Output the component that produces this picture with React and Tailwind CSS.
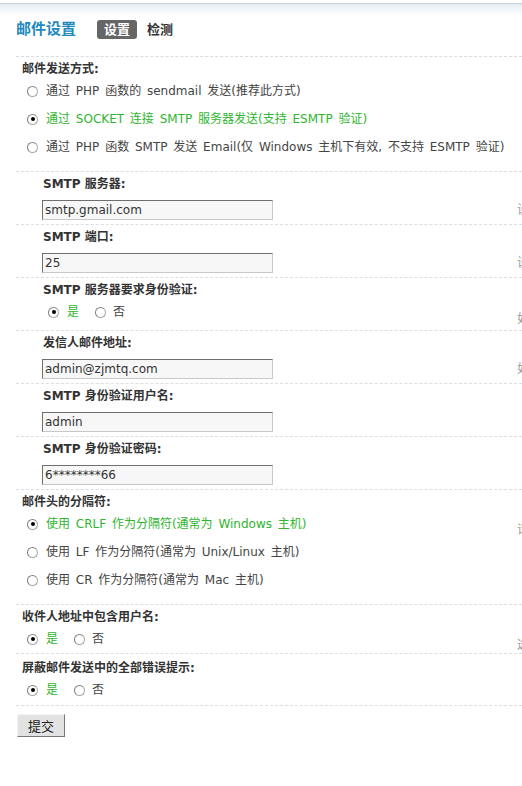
import React from "react";

const GREEN = "text-[#2fb52f]";

function Radio({ checked }) {
  return (
    <span className="w-[11px] h-[11px] shrink-0 rounded-full border border-[#a8a8a8] border-l-[#808080] border-t-[#808080] bg-white flex items-center justify-center">
      {checked && <span className="w-[4px] h-[4px] rounded-full bg-black" />}
    </span>
  );
}

function Option({ checked, children }) {
  return (
    <div className={"h-[28px] flex items-center gap-[8px] " + (checked ? GREEN : "")}>
      <Radio checked={checked} />
      <span className="whitespace-nowrap [word-spacing:2px]">{children}</span>
    </div>
  );
}

function YesNo({ indent }) {
  return (
    <div className={"h-[28px] flex items-center " + indent}>
      <Radio checked />
      <span className={"ml-[8px] " + GREEN}>是</span>
      <span className="ml-[16px]">
        <Radio />
      </span>
      <span className="ml-[7px]">否</span>
    </div>
  );
}

function Label({ children, indent }) {
  return <div className={"h-[16px] leading-[16px] font-bold text-[#333] whitespace-nowrap " + indent}>{children}</div>;
}

function Hint({ children, top = "pt-[30px]" }) {
  return <div className={"text-[#999] whitespace-nowrap leading-[16px] " + top}>{children}</div>;
}

function Row({ children, hint, hintTop, className = "" }) {
  return (
    <div className={"flex border-t border-dashed border-[#d6e0e6] " + className}>
      <div className="w-[501px] shrink-0">{children}</div>
      {hint && <Hint top={hintTop}>{hint}</Hint>}
    </div>
  );
}

function InputRow({ label, value, hint }) {
  return (
    <Row hint={hint} className="pt-[4px] pb-[4px]" hintTop="pt-[26px]">
      <Label indent="pl-[27px]">{label}</Label>
      <div className="mt-[8px] ml-[26px] w-[231px] h-[20px] bg-[#f7f7f7] border border-[#c8c8c8] border-t-[#6f6f6f] border-l-[#6f6f6f] pl-[2px] leading-[18px] text-[#333]">
        {value}
      </div>
    </Row>
  );
}

export default function App() {
  return (
    <div className="w-[522px] min-h-[786px] bg-white overflow-hidden text-[12px] text-[#444] font-[DejaVu_Sans,Noto_Sans_CJK_SC,sans-serif]">
      <div className="mt-[3px] h-[13px] border-t border-[#c5d3dc] bg-linear-to-b from-[#e4edf2] to-white" />

      <div className="pl-[16px]">
        <div className="mt-[4px] h-[19px] flex items-center">
          <span className="text-[15px] font-bold text-[#2389bd] leading-[19px]">邮件设置</span>
          <span className="ml-[21px] h-[19px] w-[40px] rounded-[3px] bg-[#666] text-white font-bold text-[13px] leading-[19px] text-center">
            设置
          </span>
          <span className="ml-[10px] font-bold text-[13px] text-[#333]">检测</span>
        </div>

        <div className="mt-[17px]">
          <Row className="pt-[4px] pb-[10px] border-[#d8dde0]">
            <Label indent="pl-[6px]">邮件发送方式:</Label>
            <div className="pl-[11px]">
              <Option>通过 PHP 函数的 sendmail 发送(推荐此方式)</Option>
              <Option checked>通过 SOCKET 连接 SMTP 服务器发送(支持 ESMTP 验证)</Option>
              <Option>通过 PHP 函数 SMTP 发送 Email(仅 Windows 主机下有效, 不支持 ESMTP 验证)</Option>
            </div>
          </Row>

          <InputRow label="SMTP 服务器:" value="smtp.gmail.com" hint="设置 SMTP 服务器的地址" />
          <InputRow label="SMTP 端口:" value="25" hint="设置 SMTP 服务器的端口, 默认为 25" />

          <Row className="pt-[4px] pb-[3px]" hint="如果 SMTP 服务器要求身份验证才可以发信, 请选择“是”" hintTop="pt-[29px]">
            <Label indent="pl-[27px]">SMTP 服务器要求身份验证:</Label>
            <YesNo indent="pl-[32px]" />
          </Row>

          <InputRow label="发信人邮件地址:" value="admin@zjmtq.com" hint="如果需要验证, 必须为本服务器的邮件地址" />
          <InputRow label="SMTP 身份验证用户名:" value="admin" />
          <InputRow label="SMTP 身份验证密码:" value="6********66" />

          <Row className="pt-[4px] pb-[10px]" hint="请根据您邮件服务器的设置调整此参数" hintTop="pt-[28px]">
            <Label indent="pl-[6px]">邮件头的分隔符:</Label>
            <div className="pl-[11px]">
              <Option checked>使用 CRLF 作为分隔符(通常为 Windows 主机)</Option>
              <Option>使用 LF 作为分隔符(通常为 Unix/Linux 主机)</Option>
              <Option>使用 CR 作为分隔符(通常为 Mac 主机)</Option>
            </div>
          </Row>

          <Row className="pt-[4px]" hint="选择“是”将在收件人地址中包含用户名" hintTop="pt-[28px]">
            <Label indent="pl-[6px]">收件人地址中包含用户名:</Label>
            <YesNo indent="pl-[11px]" />
          </Row>

          <Row className="pt-[6px] pb-[1px] border-b">
            <Label indent="pl-[6px]">屏蔽邮件发送中的全部错误提示:</Label>
            <YesNo indent="pl-[11px]" />
          </Row>
        </div>

        <button className="mt-[8px] ml-[1px] w-[48px] h-[23px] bg-[#e2e2e2] border border-[#f4f4f4] border-r-[#777] border-b-[#777] text-[13px] text-[#222] font-[Noto_Sans_CJK_SC,sans-serif] leading-[20px]">
          提交
        </button>
      </div>
    </div>
  );
}
